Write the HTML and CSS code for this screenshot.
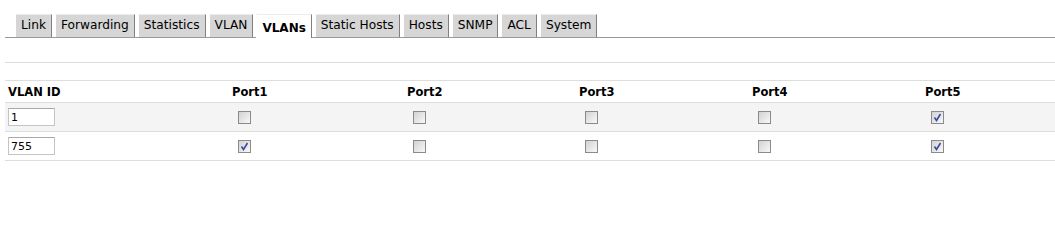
FILE: index.html
```html
<!DOCTYPE html>
<html lang="en">
<head>
  <meta charset="UTF-8">
  <title>VLANs</title>
  <link rel="stylesheet" href="styles.css">
</head>
<body>
  <ul class="tabs">
    <li><a href="#">Link</a></li>
    <li><a href="#">Forwarding</a></li>
    <li><a href="#">Statistics</a></li>
    <li><a href="#">VLAN</a></li>
    <li class="active"><a href="#">VLANs</a></li>
    <li><a href="#">Static Hosts</a></li>
    <li><a href="#">Hosts</a></li>
    <li><a href="#">SNMP</a></li>
    <li><a href="#">ACL</a></li>
    <li><a href="#">System</a></li>
  </ul>

  <div class="toolbar"></div>

  <table class="vlans">
    <colgroup>
      <col style="width: 223px">
      <col style="width: 175px">
      <col style="width: 172px">
      <col style="width: 173px">
      <col style="width: 173px">
      <col>
    </colgroup>
    <thead>
      <tr>
        <th>VLAN ID</th>
        <th>Port1</th>
        <th>Port2</th>
        <th>Port3</th>
        <th>Port4</th>
        <th>Port5</th>
      </tr>
    </thead>
    <tbody>
      <tr class="odd">
        <td><input type="text" value="1"></td>
        <td><span class="cb"></span></td>
        <td><span class="cb"></span></td>
        <td><span class="cb"></span></td>
        <td><span class="cb"></span></td>
        <td><span class="cb on"><svg viewBox="0 0 11 11" width="11" height="11"><path d="M2.5 5.5 L4.5 8.5 L8.5 2" fill="none" stroke="#3a4aa0" stroke-width="1.6"/></svg></span></td>
      </tr>
      <tr>
        <td><input type="text" value="755"></td>
        <td><span class="cb on"><svg viewBox="0 0 11 11" width="11" height="11"><path d="M2.5 5.5 L4.5 8.5 L8.5 2" fill="none" stroke="#3a4aa0" stroke-width="1.6"/></svg></span></td>
        <td><span class="cb"></span></td>
        <td><span class="cb"></span></td>
        <td><span class="cb"></span></td>
        <td><span class="cb on"><svg viewBox="0 0 11 11" width="11" height="11"><path d="M2.5 5.5 L4.5 8.5 L8.5 2" fill="none" stroke="#3a4aa0" stroke-width="1.6"/></svg></span></td>
      </tr>
    </tbody>
  </table>
</body>
</html>
```

FILE: styles.css
```css
body {
  margin: 0;
  font-family: "DejaVu Sans", Verdana, sans-serif;
  font-size: 11px;
  color: #000;
  background: #fff;
}
.tabs {
  list-style: none;
  display: flex;
  gap: 3px;
  margin: 0 0 0 5px;
  padding: 14px 0 0 10px;
  border-bottom: 1px solid #999;
}
.tabs li {
  background: #d6d6d6;
  border-top: 1px solid #ececec;
  border-left: 1px solid #fff;
  border-right: 1px solid #808080;
}
.tabs a {
  display: block;
  padding: 3px 5px 4px;
  line-height: 15px;
  font-size: 12.2px;
  color: #000;
  text-decoration: none;
}
.tabs li.active {
  background: #fff;
  margin-bottom: -1px;
}
.tabs li.active a {
  font-weight: bold;
  font-size: 12px;
  padding: 6px 5px 2px;
}
.toolbar {
  margin-left: 5px;
  height: 24px;
  border-bottom: 1px solid #ddd;
}
.vlans {
  margin: 17px 0 0 5px;
  width: 1050px;
  table-layout: fixed;
  border-collapse: collapse;
  border-top: 1px solid #ddd;
}
.vlans tr {
  border-bottom: 1px solid #ddd;
}
.vlans th {
  text-align: left;
  font-weight: bold;
  font-size: 11.5px;
  height: 21px;
  padding: 0 4px;
}
.vlans th:first-child {
  padding-left: 3px;
}
.vlans td {
  height: 28px;
  padding: 0 4px;
}
.vlans tr.odd {
  background: #f4f4f4;
}
.vlans input {
  display: block;
  width: 47px;
  height: 18px;
  box-sizing: border-box;
  margin-left: -1px;
  padding: 0 2px;
  border: 1px solid #c4c4c4;
  border-top-color: #a8a8a8;
  font-family: "DejaVu Sans", Verdana, sans-serif;
  font-size: 11px;
  background: #fff;
}
.cb {
  display: block;
  width: 13px;
  height: 13px;
  box-sizing: border-box;
  margin-left: 6px;
  border: 1px solid #8a8a8a;
  background: linear-gradient(135deg, #d2d2d2, #f8f8f8);
}
.cb svg {
  display: block;
}
```
